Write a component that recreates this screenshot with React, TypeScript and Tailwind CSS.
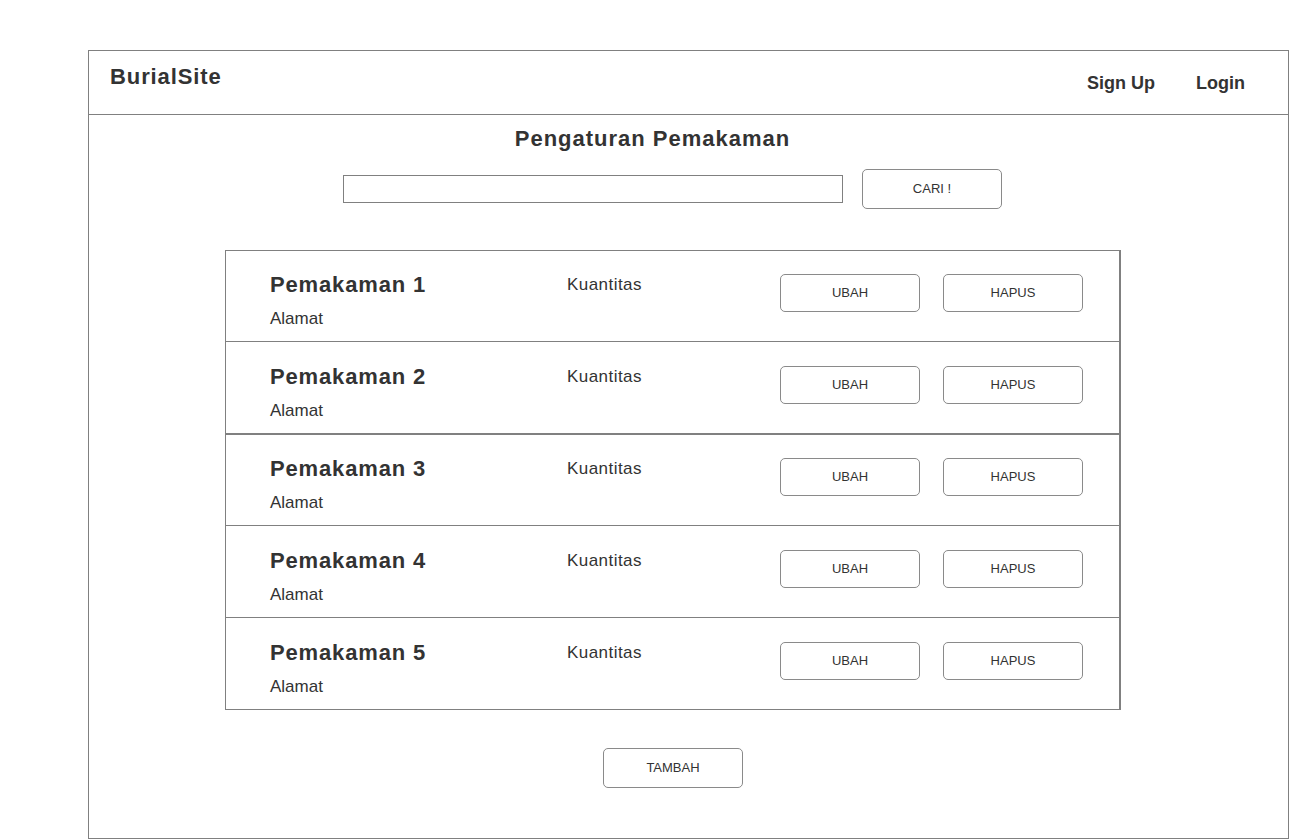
const rows = [
  { n: 1, h: "h-[91px] pt-[21px]" },
  { n: 2, h: "h-[93px] pt-[22px] border-b" },
  { n: 3, h: "h-[91px] pt-[21px]" },
  { n: 4, h: "h-[92px] pt-[22px]" },
  { n: 5, h: "h-[92px] pt-[22px]" },
];

const ActionButton = ({ label }: { label: string }) => (
  <button className="w-[140px] h-[38px] rounded-[5px] border border-[#8a8a8a] bg-white text-[13px] text-[#333]">
    {label}
  </button>
);

export default function App() {
  return (
    <div
      className="min-h-[839px] bg-white text-[#333]"
      style={{ fontFamily: '"Liberation Sans", Arial, sans-serif' }}
    >
      <div className="pt-[50px] pl-[88px]">
        <div className="w-[1201px] h-[789px] border border-[#808080]">
          {/* Header */}
          <div className="h-[64px] border-b border-[#808080] flex items-start justify-between">
            <div className="pl-[21px] pt-[13px] text-[22px] leading-[26px] font-bold tracking-[0.9px]">
              BurialSite
            </div>
            <div className="flex gap-[41px] pt-[20px] pr-[43px] text-[18px] leading-[24px] font-bold">
              <span>Sign Up</span>
              <span>Login</span>
            </div>
          </div>

          {/* Content */}
          <div className="ml-[136px] w-[896px]">
            <h1 className="mt-[11px] pr-[41px] text-center text-[22px] leading-[26px] font-bold tracking-[1px]">
              Pengaturan Pemakaman
            </h1>

            <div className="mt-[17px] flex items-center justify-center gap-[19px] pr-[1px]">
              <input className="w-[500px] h-[28px] border border-[#808080] outline-none" />
              <button className="w-[140px] h-[40px] rounded-[5px] border border-[#8a8a8a] bg-white text-[13px] text-[#333]">
                CARI !
              </button>
            </div>

            {/* List */}
            <div className="mt-[41px] border-l border-r-2 border-b border-[#808080]">
              {rows.map((r) => (
                <div
                  key={r.n}
                  className={`${r.h} border-t border-[#808080] flex items-start pl-[44px]`}
                >
                  <div className="w-[297px]">
                    <div className="text-[22px] leading-[26px] font-bold tracking-[0.85px]">
                      Pemakaman {r.n}
                    </div>
                    <div className="mt-[11px] text-[17px] leading-[20px]">
                      Alamat
                    </div>
                  </div>
                  <div className="w-[213px] text-[17px] leading-[26px] tracking-[0.45px]">
                    Kuantitas
                  </div>
                  <div className="mt-[2px] flex gap-[23px]">
                    <ActionButton label="UBAH" />
                    <ActionButton label="HAPUS" />
                  </div>
                </div>
              ))}
            </div>

            <div className="mt-[38px] flex justify-center">
              <button className="w-[140px] h-[40px] rounded-[5px] border border-[#8a8a8a] bg-white text-[13px] text-[#333]">
                TAMBAH
              </button>
            </div>
          </div>
        </div>
      </div>
    </div>
  );
}
